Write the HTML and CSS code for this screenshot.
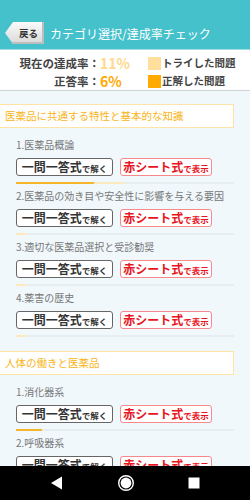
FILE: index.html
```html
<!DOCTYPE html>
<html lang="ja">
<head>
    <meta charset="UTF-8">
    <meta name="viewport" content="width=device-width, initial-scale=1.0">
    <title>カテゴリ選択/達成率チェック</title>
    <link rel="stylesheet" href="styles.css">
</head>
<body>
    <div class="statusbar"></div>
    <header class="header">
        <button class="back">戻る</button>
        <h1 class="title">カテゴリ選択/達成率チェック</h1>
    </header>

    <div class="stats">
        <div class="stat-label">現在の達成率：</div>
        <div class="stat-value tried">11%</div>
        <div class="legend"><span class="swatch tried-bg"></span>トライした問題</div>
        <div class="stat-label">正答率：</div>
        <div class="stat-value correct">6%</div>
        <div class="legend"><span class="swatch correct-bg"></span>正解した問題</div>
    </div>

    <main class="content">
        <section class="section">
            <h2 class="section-title">医薬品に共通する特性と基本的な知識</h2>
            <div class="items">
                <div class="item">
                    <div class="item-name">1.医薬品概論</div>
                    <div class="buttons">
                        <a class="btn btn-qa"><span class="big">一問一答式</span><span class="small">で解く</span></a>
                        <a class="btn btn-red"><span class="big">赤シート式</span><span class="small">で表示</span></a>
                    </div>
                    <div class="progress">
                        <div class="bar-tried" style="width: 50%"></div>
                        <div class="bar-correct" style="width: 36%"></div>
                    </div>
                </div>
                <div class="item">
                    <div class="item-name">2.医薬品の効き目や安全性に影響を与える要因</div>
                    <div class="buttons">
                        <a class="btn btn-qa"><span class="big">一問一答式</span><span class="small">で解く</span></a>
                        <a class="btn btn-red"><span class="big">赤シート式</span><span class="small">で表示</span></a>
                    </div>
                    <div class="progress">
                        <div class="bar-tried" style="width: 5%"></div>
                    </div>
                </div>
                <div class="item">
                    <div class="item-name">3.適切な医薬品選択と受診勧奨</div>
                    <div class="buttons">
                        <a class="btn btn-qa"><span class="big">一問一答式</span><span class="small">で解く</span></a>
                        <a class="btn btn-red"><span class="big">赤シート式</span><span class="small">で表示</span></a>
                    </div>
                    <div class="progress">
                        <div class="bar-tried" style="width: 5%"></div>
                    </div>
                </div>
                <div class="item">
                    <div class="item-name">4.薬害の歴史</div>
                    <div class="buttons">
                        <a class="btn btn-qa"><span class="big">一問一答式</span><span class="small">で解く</span></a>
                        <a class="btn btn-red"><span class="big">赤シート式</span><span class="small">で表示</span></a>
                    </div>
                    <div class="progress">
                        <div class="bar-tried" style="width: 5%"></div>
                    </div>
                </div>
            </div>
        </section>

        <section class="section">
            <h2 class="section-title">人体の働きと医薬品</h2>
            <div class="items">
                <div class="item">
                    <div class="item-name">1.消化器系</div>
                    <div class="buttons">
                        <a class="btn btn-qa"><span class="big">一問一答式</span><span class="small">で解く</span></a>
                        <a class="btn btn-red"><span class="big">赤シート式</span><span class="small">で表示</span></a>
                    </div>
                    <div class="progress">
                        <div class="bar-correct" style="width: 12%"></div>
                    </div>
                </div>
                <div class="item">
                    <div class="item-name">2.呼吸器系</div>
                    <div class="buttons">
                        <a class="btn btn-qa"><span class="big">一問一答式</span><span class="small">で解く</span></a>
                        <a class="btn btn-red"><span class="big">赤シート式</span><span class="small">で表示</span></a>
                    </div>
                    <div class="progress"></div>
                </div>
            </div>
        </section>
    </main>

    <nav class="navbar">
        <svg width="14" height="14" viewBox="0 0 14 14"><polygon points="12,0.5 12,13.5 1,7" fill="#fff"/></svg>
        <svg width="18" height="18" viewBox="0 0 18 18"><circle cx="9" cy="9" r="7.3" fill="none" stroke="#fff" stroke-width="1.4"/><circle cx="9" cy="9" r="5.4" fill="#fff"/></svg>
        <svg width="12" height="12" viewBox="0 0 12 12"><rect x="0.5" y="0.5" width="11" height="11" fill="#fff"/></svg>
    </nav>
</body>
</html>
```

FILE: styles.css
```css
body {
    margin: 0;
    height: 100vh;
    display: flex;
    flex-direction: column;
    overflow: hidden;
    font-family: "Noto Sans CJK JP", "Noto Sans", sans-serif;
    background-color: #f0f8fc;
}

.statusbar {
    flex: none;
    height: 20px;
    background-color: #45c1cc;
}

.header {
    flex: none;
    display: flex;
    align-items: flex-start;
    gap: 6px;
    height: 29px;
    padding: 0 0 0 5px;
    background-color: #45c1cc;
    border-bottom: 1px solid #9fdde3;
}

.back {
    margin-top: 2px;
    width: 39px;
    height: 22px;
    padding: 0 0 0 8px;
    border: none;
    clip-path: polygon(8px 0, 100% 0, 100% 100%, 8px 100%, 0 50%);
    background: linear-gradient(#fbfbfb, #d8d8d8);
    box-shadow: inset -2px -2px 0 #bdbdbd;
    font-family: inherit;
    font-size: 9.5px;
    font-weight: bold;
    color: #333;
}

.title {
    margin: 0;
    font-size: 12px;
    font-weight: normal;
    line-height: 28px;
    color: #fff;
}

.stats {
    flex: none;
    display: grid;
    grid-template-columns: 100px 48px 1fr;
    grid-template-rows: 18px 18px;
    align-items: center;
    height: 41px;
    padding-top: 4px;
    box-sizing: border-box;
    background-color: #fff;
    border-bottom: 1px solid #cfd3d5;
}

.stat-label {
    text-align: right;
    font-size: 11.5px;
    font-weight: bold;
    line-height: 18px;
    color: #444;
}

.stat-value {
    font-size: 14px;
    font-weight: bold;
    line-height: 16px;
}

.tried {
    color: #ffd88a;
}

.correct {
    color: #ffa800;
}

.legend {
    display: flex;
    align-items: center;
    gap: 1px;
    font-size: 10.5px;
    font-weight: bold;
    line-height: 16px;
    color: #444;
}

.swatch {
    width: 13px;
    height: 13px;
}

.tried-bg {
    background-color: #ffdf9c;
}

.correct-bg {
    background-color: #ffaa00;
}

.content {
    flex: 1;
    overflow: hidden;
    padding: 13px 16px 0 0;
}

.section {
    margin-bottom: 14px;
}

.section-title {
    margin: 0;
    height: 24px;
    box-sizing: border-box;
    padding-left: 5px;
    background-color: #fff;
    border: 1px solid #fde3a6;
    border-left: none;
    font-size: 10.5px;
    font-weight: normal;
    line-height: 22px;
    color: #f7b519;
}

.items {
    padding: 10px 0 0 16px;
}

.item-name {
    font-size: 10px;
    line-height: 14px;
    color: #777;
    margin-bottom: 6px;
    white-space: nowrap;
}

.buttons {
    display: flex;
    gap: 7px;
    margin-bottom: 6px;
}

.btn {
    display: flex;
    align-items: baseline;
    justify-content: center;
    height: 18px;
    box-sizing: border-box;
    border-radius: 3px;
    background-color: #fff;
    font-weight: bold;
    line-height: 16px;
}

.btn-qa {
    width: 97px;
    border: 1px solid #666;
    color: #333;
}

.btn-red {
    width: 92px;
    border: 1px solid #f7888c;
    color: #e8141e;
}

.big {
    font-size: 12px;
}

.small {
    font-size: 8.5px;
}

.progress {
    position: relative;
    height: 2px;
    margin-bottom: 5px;
    background-color: #e6eef2;
}

.bar-tried,
.bar-correct {
    position: absolute;
    left: 0;
    top: 0;
    height: 2px;
}

.bar-tried {
    background-color: #fde9c0;
}

.bar-correct {
    background-color: #f7b52c;
}

.navbar {
    flex: none;
    height: 34px;
    display: flex;
    align-items: center;
    justify-content: space-between;
    padding: 0 50px;
    background-color: #000;
}
```
